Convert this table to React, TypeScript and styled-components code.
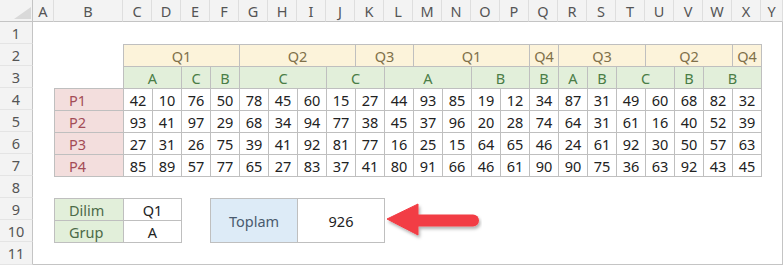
import React from "react";
import styled, { createGlobalStyle } from "styled-components";

const GlobalStyle = createGlobalStyle`
  body {
    margin: 0;
    background: #ffffff;
    font-family: "Noto Sans", "Open Sans", sans-serif;
  }
`;

type Tone = "plain" | "quarter" | "group" | "label" | "key" | "total";

const tones: Record<Tone, { bg: string; fg: string }> = {
  plain: { bg: "#ffffff", fg: "#222222" },
  quarter: { bg: "#fcf3da", fg: "#807049" },
  group: { bg: "#e2efda", fg: "#4a7d46" },
  label: { bg: "#f3dedd", fg: "#a34c56" },
  key: { bg: "#e2efda", fg: "#4d6b48" },
  total: { bg: "#ddebf7", fg: "#4a5a6e" },
};

const Sheet = styled.div`
  display: grid;
  grid-template-columns: 33px 21px 69px repeat(22, 29px) 22px;
  grid-template-rows: repeat(11, 22px) 23px;
  width: 783px;
  height: 265px;
  font-size: 14.5px;
`;

const Corner = styled.div`
  grid-column: 1;
  grid-row: 1;
  background: #f3f3f3;
  border-right: 1px solid #c4c4c4;
  border-bottom: 1px solid #c4c4c4;
  box-sizing: border-box;
  display: flex;
  align-items: flex-end;
  justify-content: flex-end;
  padding: 0 1px 2px 0;
`;

const ColHeader = styled.div<{ $col: number }>`
  grid-column: ${(p) => p.$col};
  grid-row: 1;
  background: #f3f3f3;
  border-bottom: 1px solid #c4c4c4;
  border-right: 1px solid #dedede;
  box-sizing: border-box;
  color: #555555;
  display: flex;
  align-items: center;
  justify-content: center;
`;

const RowHeader = styled.div<{ $row: number }>`
  grid-column: 1;
  grid-row: ${(p) => p.$row};
  background: #f3f3f3;
  border-right: 1px solid #c4c4c4;
  border-bottom: 1px solid #e4e4e4;
  box-sizing: border-box;
  color: #555555;
  display: flex;
  align-items: center;
  justify-content: center;
`;

const Body = styled.div`
  grid-column: 2 / -1;
  grid-row: 2 / -1;
  border-right: 1px solid #c4c4c4;
  border-bottom: 1px solid #c4c4c4;
  box-sizing: border-box;
  background: #ffffff;
`;

const Cell = styled.div<{
  $col: number;
  $row: number;
  $span?: number;
  $rowSpan?: number;
  $tone?: Tone;
  $indent?: boolean;
}>`
  grid-column: ${(p) => p.$col} / span ${(p) => p.$span ?? 1};
  grid-row: ${(p) => p.$row} / span ${(p) => p.$rowSpan ?? 1};
  margin: 0 -1px -1px 0;
  border: 1px solid #bfbfbf;
  box-sizing: border-box;
  background: ${(p) => tones[p.$tone ?? "plain"].bg};
  color: ${(p) => tones[p.$tone ?? "plain"].fg};
  display: flex;
  align-items: center;
  justify-content: ${(p) => (p.$indent ? "flex-start" : "center")};
  padding-left: ${(p) => (p.$indent ? "14px" : "0")};
  white-space: nowrap;
`;

const ArrowSlot = styled.div`
  grid-column: 13 / span 4;
  grid-row: 10 / span 2;
  display: flex;
  align-items: center;
  padding-left: 2px;
`;

const letters = "ABCDEFGHIJKLMNOPQRSTUVWXY".split("");

// C = grid column 4
const quarters: [string, number][] = [
  ["Q1", 4],
  ["Q2", 4],
  ["Q3", 2],
  ["Q1", 4],
  ["Q4", 1],
  ["Q3", 3],
  ["Q2", 3],
  ["Q4", 1],
];

const groups: [string, number][] = [
  ["A", 2],
  ["C", 1],
  ["B", 1],
  ["C", 3],
  ["C", 2],
  ["A", 3],
  ["B", 2],
  ["B", 1],
  ["A", 1],
  ["B", 1],
  ["C", 2],
  ["B", 1],
  ["B", 2],
];

const data: [string, number[]][] = [
  ["P1", [42, 10, 76, 50, 78, 45, 60, 15, 27, 44, 93, 85, 19, 12, 34, 87, 31, 49, 60, 68, 82, 32]],
  ["P2", [93, 41, 97, 29, 68, 34, 94, 77, 38, 45, 37, 96, 20, 28, 74, 64, 31, 61, 16, 40, 52, 39]],
  ["P3", [27, 31, 26, 75, 39, 41, 92, 81, 77, 16, 25, 15, 64, 65, 46, 24, 61, 92, 30, 50, 57, 63]],
  ["P4", [85, 89, 57, 77, 65, 27, 83, 37, 41, 80, 91, 66, 46, 61, 90, 90, 75, 36, 63, 92, 43, 45]],
];

const spanRow = (items: [string, number][], row: number, tone: Tone) => {
  let col = 4;
  return items.map(([text, span], i) => {
    const cell = (
      <Cell key={`${row}-${i}`} $col={col} $row={row} $span={span} $tone={tone}>
        {text}
      </Cell>
    );
    col += span;
    return cell;
  });
};

const Arrow = () => (
  <svg width="96" height="46" viewBox="0 0 96 46">
    <defs>
      <filter id="arrowShadow" x="-10%" y="-20%" width="130%" height="160%">
        <feDropShadow dx="1.5" dy="2.5" stdDeviation="1.5" floodColor="#000" floodOpacity="0.3" />
      </filter>
    </defs>
    <g filter="url(#arrowShadow)" fill="#f23c44" stroke="#f23c44">
      <line x1="30" y1="23.5" x2="87" y2="23.5" strokeWidth="12" strokeLinecap="round" />
      <polygon points="1,22 32,7 32,38" strokeWidth="1" strokeLinejoin="round" />
    </g>
  </svg>
);

export default function App() {
  return (
    <>
      <GlobalStyle />
      <Sheet>
        <Corner>
          <svg width="17" height="12" viewBox="0 0 17 12">
            <polygon points="17,0 17,12 0,12" fill="#d9d9d9" />
          </svg>
        </Corner>
        {letters.map((l, i) => (
          <ColHeader key={l} $col={i + 2}>
            {l}
          </ColHeader>
        ))}
        <Body />
        {Array.from({ length: 11 }, (_, i) => (
          <RowHeader key={i} $row={i + 2}>
            {i + 1}
          </RowHeader>
        ))}

        {spanRow(quarters, 3, "quarter")}
        {spanRow(groups, 4, "group")}

        {data.map(([label, values], r) => (
          <React.Fragment key={label}>
            <Cell $col={3} $row={5 + r} $tone="label" $indent>
              {label}
            </Cell>
            {values.map((v, c) => (
              <Cell key={c} $col={4 + c} $row={5 + r}>
                {v}
              </Cell>
            ))}
          </React.Fragment>
        ))}

        <Cell $col={3} $row={10} $tone="key" $indent>
          Dilim
        </Cell>
        <Cell $col={4} $row={10} $span={2}>
          Q1
        </Cell>
        <Cell $col={3} $row={11} $tone="key" $indent>
          Grup
        </Cell>
        <Cell $col={4} $row={11} $span={2}>
          A
        </Cell>

        <Cell $col={7} $row={10} $span={3} $rowSpan={2} $tone="total">
          Toplam
        </Cell>
        <Cell $col={10} $row={10} $span={3} $rowSpan={2}>
          926
        </Cell>

        <ArrowSlot>
          <Arrow />
        </ArrowSlot>
      </Sheet>
    </>
  );
}
